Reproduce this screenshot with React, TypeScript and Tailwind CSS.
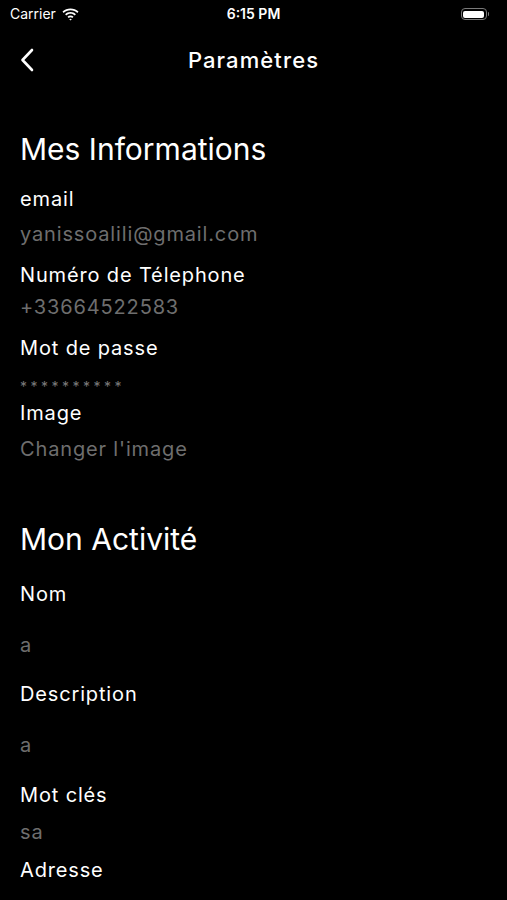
export default function App() {
  return (
    <div
      className="min-h-[900px] w-full bg-black text-white overflow-hidden"
      style={{ fontFamily: 'Inter, "Noto Sans", sans-serif' }}
    >
      {/* status bar */}
      <div className="relative flex h-[28px] items-center px-[10px]">
        <div className="flex items-center gap-[6px]">
          <span className="text-[14px] leading-none text-white">Carrier</span>
          <svg width="17" height="13" viewBox="0 0 17 13" fill="white">
            <path d="M8.5 2.2c2.6 0 5 1 6.8 2.7l1.2-1.3C14.3 1.5 11.5.4 8.5.4S2.7 1.5.5 3.6l1.2 1.3C3.5 3.2 5.9 2.2 8.5 2.2z" />
            <path d="M8.5 5.8c1.6 0 3.1.6 4.2 1.7l1.2-1.3c-1.4-1.4-3.3-2.2-5.4-2.2S4.5 4.8 3.1 6.2l1.2 1.3c1.1-1.1 2.6-1.7 4.2-1.7z" />
            <path d="M8.5 9.3c.7 0 1.3.3 1.8.7l1.2-1.3c-.8-.8-1.9-1.2-3-1.2s-2.2.4-3 1.2L6.7 10c.5-.4 1.1-.7 1.8-.7z" />
            <path d="M8.5 12.6l1.3-1.4c-.4-.3-.8-.5-1.3-.5s-.9.2-1.3.5z" />
          </svg>
        </div>
        <span className="absolute left-1/2 -translate-x-1/2 text-[14px] font-semibold leading-none">
          6:15 PM
        </span>
        <div className="ml-auto mr-[8px] flex items-center">
          <div className="h-[12px] w-[26px] rounded-[4px] border border-[#7a7a7a] p-[1.5px]">
            <div className="h-full w-full rounded-[2px] bg-white" />
          </div>
          <div className="ml-[1px] h-[4px] w-[1.5px] rounded-r-full bg-[#7a7a7a]" />
        </div>
      </div>

      {/* nav bar */}
      <div className="relative flex h-[64px] items-center px-[20px]">
        <svg width="14" height="24" viewBox="0 0 14 24" fill="none">
          <path d="M12 2 2.5 12 12 22" stroke="white" strokeWidth="2.6" strokeLinecap="round" strokeLinejoin="round" />
        </svg>
        <h1 className="absolute left-1/2 -translate-x-1/2 text-[22px] font-medium leading-none tracking-[1.1px]">
          Paramètres
        </h1>
      </div>

      <div className="flex flex-col px-[20px] text-[20px] tracking-[0.85px]">
        <h2 className="mt-[39px] text-[30px] leading-[36px] tracking-normal">Mes Informations</h2>
        <p className="mt-[20px] leading-[24px]">email</p>
        <p className="mt-[11px] leading-[24px] text-[#6e6e6e]">yanissoalili@gmail.com</p>
        <p className="mt-[17px] leading-[24px]">Numéro de Télephone</p>
        <p className="mt-[8px] leading-[24px] text-[#6e6e6e]">+33664522583</p>
        <p className="mt-[17px] leading-[24px]">Mot de passe</p>
        <p className="mt-[15px] text-[14px] leading-[24px] tracking-[3.5px] text-[#7a7a7a]">**********</p>
        <p className="mt-[2px] leading-[24px]">Image</p>
        <p className="mt-[12px] leading-[24px] text-[#6e6e6e]">Changer l'image</p>

        <h2 className="mt-[60px] text-[30px] leading-[36px] tracking-normal">Mon Activité</h2>
        <p className="mt-[25px] leading-[24px]">Nom</p>
        <p className="mt-[27px] leading-[24px] text-[#6e6e6e]">a</p>
        <p className="mt-[25px] leading-[24px]">Description</p>
        <p className="mt-[27px] leading-[24px] text-[#6e6e6e]">a</p>
        <p className="mt-[26px] leading-[24px]">Mot clés</p>
        <p className="mt-[13px] leading-[24px] text-[#6e6e6e]">sa</p>
        <p className="mt-[14px] leading-[24px]">Adresse</p>
      </div>
    </div>
  )
}
